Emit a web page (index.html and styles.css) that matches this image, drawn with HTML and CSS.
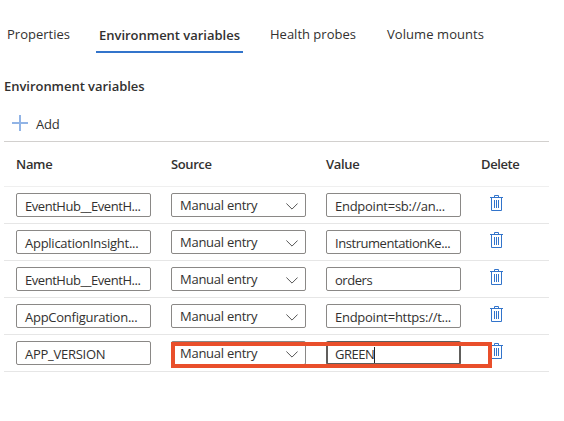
FILE: index.html
```html
<!DOCTYPE html>
<html lang="en">
<head>
<meta charset="utf-8">
<title>Environment variables</title>
<link rel="stylesheet" href="styles.css">
</head>
<body>
<svg width="0" height="0" class="defs">
  <symbol id="trash" viewBox="0 0 13 17"><path d="M0 2.5H13M4.5 2V.5H8.5V2M1.5 3V15.5H11.5V3M4.5 5V13M6.5 5V13M8.5 5V13" fill="none" stroke="#3274cb"/></symbol>
  <symbol id="chevron" viewBox="0 0 12 7"><path d="M.4.5L6 6.1L11.6.5" fill="none" stroke="#555" stroke-width="1"/></symbol>
</svg>
<nav class="tabs">
  <a class="tab">Properties</a>
  <a class="tab active">Environment variables</a>
  <a class="tab">Health probes</a>
  <a class="tab wide">Volume mounts</a>
</nav>
<h2 class="title">Environment variables</h2>
<div class="add"><svg width="16" height="16" viewBox="0 0 16 16"><path d="M8 0V16M0 8H16" stroke="#91b4e6" stroke-width="2"/></svg><span>Add</span></div>
<main class="grid">
  <div class="row head"><span>Name</span><span>Source</span><span>Value</span><span>Delete</span></div>
  <div class="row"><div class="field tight">EventHub__EventH...</div><div class="field select">Manual entry<svg><use href="#chevron"/></svg></div><div class="field">Endpoint=sb://an...</div><svg class="trash"><use href="#trash"/></svg></div>
  <div class="row"><div class="field">ApplicationInsight...</div><div class="field select">Manual entry<svg><use href="#chevron"/></svg></div><div class="field tight">InstrumentationKe...</div><svg class="trash"><use href="#trash"/></svg></div>
  <div class="row"><div class="field tight">EventHub__EventH...</div><div class="field select">Manual entry<svg><use href="#chevron"/></svg></div><div class="field tight">orders</div><svg class="trash"><use href="#trash"/></svg></div>
  <div class="row"><div class="field">AppConfiguration...</div><div class="field select">Manual entry<svg><use href="#chevron"/></svg></div><div class="field">Endpoint=https://t...</div><svg class="trash"><use href="#trash"/></svg></div>
  <div class="row"><div class="field">APP_VERSION</div><div class="field select">Manual entry<svg><use href="#chevron"/></svg></div><div class="field tight focused">GREEN<i class="caret"></i></div><svg class="trash"><use href="#trash"/></svg><div class="highlight"></div></div>
</main>
</body>
</html>
```
FILE: styles.css
```css
* { box-sizing: border-box; }
body {
  margin: 0;
  background: #fff;
  color: #323130;
  font: 13px/18px "Open Sans", "Noto Sans", sans-serif;
  overflow: hidden;
}
.defs { position: absolute; }
.tabs {
  display: grid;
  grid-template-columns: 89px 174px 117px 120px;
  padding: 25px 0 0 7px;
  height: 53px;
  white-space: nowrap;
}
.tab.wide { letter-spacing: .07px; }
.tab.active {
  width: 147px;
  height: 28px;
  padding: 1px 0 0 3px;
  border-bottom: 2px solid #3274cb;
  font-weight: 600;
  letter-spacing: -.02px;
}
.title {
  margin: 24px 0 0 4px;
  font-size: 13px;
  line-height: 18px;
  font-weight: 600;
  letter-spacing: -.04px;
}
.add {
  display: flex;
  gap: 8px;
  height: 46px;
  padding: 20px 0 0 12px;
  letter-spacing: -.2px;
}
.grid {
  width: 545px;
  margin-left: 4px;
  border-top: 1px solid #d2d0ce;
}
.row {
  position: relative;
  display: grid;
  grid-template-columns: 155px 155px 155px 68px;
  height: 37px;
  padding: 6px 0 0 12px;
  border-bottom: 1px solid #e6e6e6;
}
.row.head {
  height: 45px;
  padding-top: 13px;
  border-bottom-color: #efefef;
  font-weight: 600;
  letter-spacing: -.4px;
}
.row.head span:first-child,
.row.head span:nth-child(3) { letter-spacing: -.3px; }
.field {
  position: relative;
  width: 135px;
  height: 24px;
  padding: 3px 0 0 8px;
  border: 1px solid #8a8886;
  border-radius: 2px;
  line-height: 18px;
  letter-spacing: -.26px;
  white-space: nowrap;
}
.tight { letter-spacing: -.45px; }
.select { padding-top: 2px; }
.select svg {
  position: absolute;
  right: 7px;
  top: 9px;
  width: 12px;
  height: 7px;
}
.trash {
  width: 13px;
  height: 17px;
  margin: 2px 0 0 9px;
}
.focused {
  border: 2px solid #605e5c;
  padding: 2px 0 0 7px;
}
.caret {
  display: inline-block;
  width: 1px;
  height: 16px;
  background: #222;
  vertical-align: -4px;
}
.highlight {
  position: absolute;
  left: 167px;
  top: 7px;
  width: 321px;
  height: 26px;
  border: 4px solid #e94f2b;
}
```
